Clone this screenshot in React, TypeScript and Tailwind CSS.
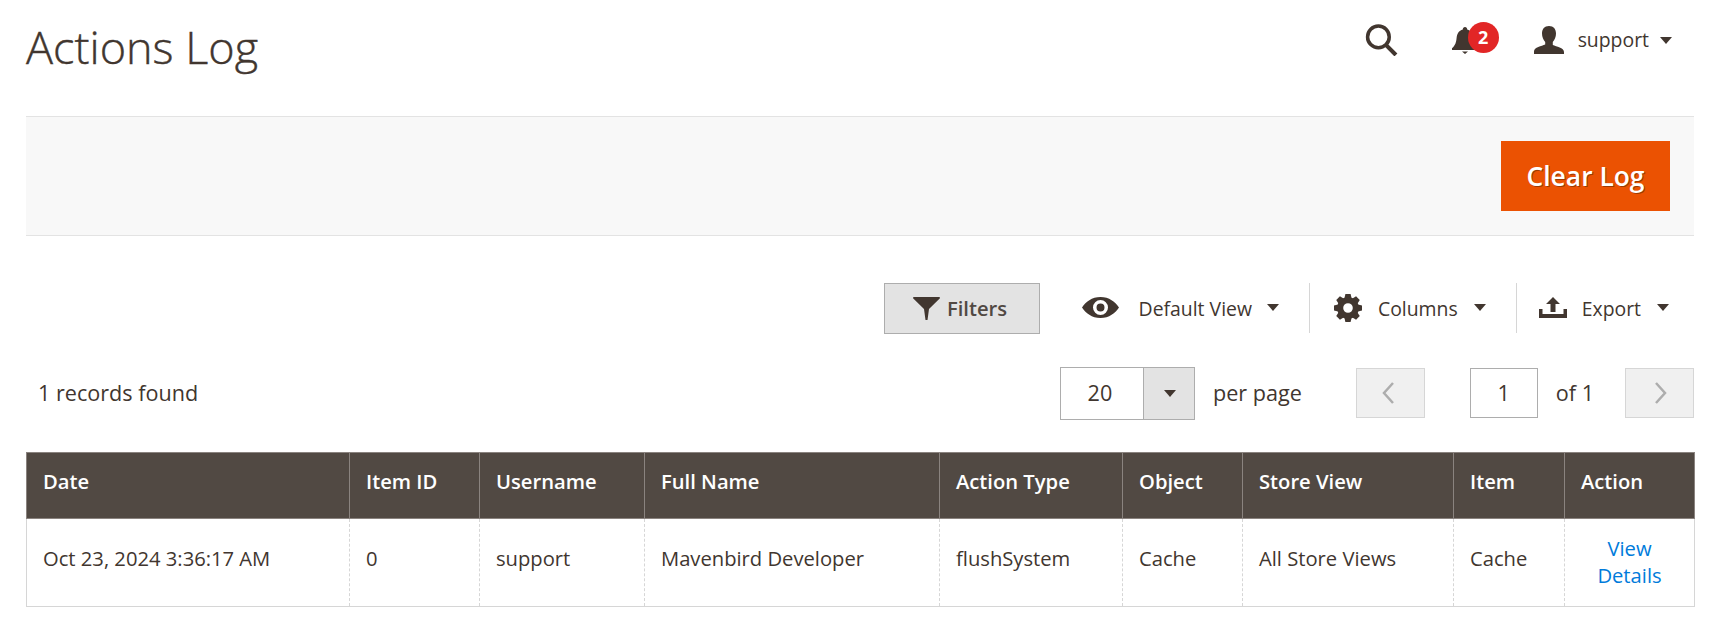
import React from "react";

const Caret = ({ className = "" }: { className?: string }) => (
  <svg className={className} width="12" height="7" viewBox="0 0 12 7">
    <path d="M0 0h12L6 7z" fill="#41362f" />
  </svg>
);

const columns = [
  { label: "Date", width: "w-[323px]" },
  { label: "Item ID", width: "w-[130px]" },
  { label: "Username", width: "w-[165px]" },
  { label: "Full Name", width: "w-[295px]" },
  { label: "Action Type", width: "w-[183px]" },
  { label: "Object", width: "w-[120px]" },
  { label: "Store View", width: "w-[211px]" },
  { label: "Item", width: "w-[111px]" },
  { label: "Action", width: "w-[130px]" },
];

const row = [
  "Oct 23, 2024 3:36:17 AM",
  "0",
  "support",
  "Mavenbird Developer",
  "flushSystem",
  "Cache",
  "All Store Views",
  "Cache",
];

const teeth = [0, 45, 90, 135, 180, 225, 270, 315];

export default function App() {
  return (
    <div className="min-h-[629px] bg-white pl-[26px] pr-[25px] text-[#41362f] font-['Open_Sans',sans-serif] text-[20.2px]">
      {/* Page header */}
      <header className="h-[116px] flex items-start justify-between">
        <h1 className="mt-[18px] text-[45px] leading-[58px] font-light [-webkit-text-stroke:0.4px_#41362f]">Actions Log</h1>
        <div className="flex items-center mt-[25px] mr-[22px] h-[30px]">
          <svg width="33" height="32" viewBox="0 0 32 31" fill="none">
            <circle cx="13" cy="12.5" r="10.5" stroke="#41362f" strokeWidth="3.4" />
            <path d="M20.5 20.5L30 30" stroke="#41362f" strokeWidth="4" />
          </svg>
          <div className="relative ml-[54px] w-[48px] h-[30px]">
            <svg className="absolute left-0 top-[2px]" width="26" height="27" viewBox="0 0 26 27">
              <path d="M13 0c1.400 0 2.200 1 2.200 2.400 4 1 5.800 4.200 6.200 8.600.4 4.400 1.300 7.200 4.600 10.300V23H0v-1.700c3.300-3.100 4.200-5.900 4.600-10.300C5 6.600 6.800 3.400 10.800 2.400 10.800 1 11.600 0 13 0zM10 24.500h6L13 27z" fill="#41362f" />
            </svg>
            <span className="absolute left-[16px] top-[-3px] w-[31px] h-[31px] rounded-full bg-[#e22626] text-white text-[18px] font-bold flex items-center justify-center">
              2
            </span>
          </div>
          <svg className="ml-[34px]" width="30" height="28" viewBox="0 0 30 28">
            <path d="M15 0c4.600 0 7 3 7 7.500 0 3.500-1.400 6.500-3.200 8.500v3c3.500 1.600 11.200 2.500 11.200 7V28H0v-2.500c0-4.500 7.700-5.400 11.200-7V16C9.400 14 8 11 8 7.500 8 3 10.400 0 15 0z" fill="#41362f" />
          </svg>
          <span className="ml-[14px] text-[19.4px] leading-[30px]">support</span>
          <Caret className="ml-[11px]" />
        </div>
      </header>

      {/* Page actions */}
      <div className="h-[120px] bg-[#f8f8f8] border-y border-[#e3e3e3] flex items-center justify-end pr-[24px]">
        <button className="w-[169px] h-[70px] pt-[2px] bg-[#eb5202] text-white text-[26.4px] font-semibold [text-shadow:1px_1px_0_#9c3a03]">
          Clear Log
        </button>
      </div>

      {/* Grid actions */}
      <div className="mt-[46px] h-[52px] flex items-center justify-end pr-[25px] text-[19.4px]">
        <button className="w-[156px] h-[51px] pr-[3px] bg-[#e3e3e3] border border-[#adadad] flex items-center justify-center font-semibold text-[20.2px] text-[#514943]">
          <svg width="27" height="23" viewBox="0 0 27 23" className="mr-[7px]">
            <path d="M1 0h25c1 0 1.300.8.700 1.500L16 12l-1.500 11h-2L11 12 .3 1.500C-.3.800 0 0 1 0z" fill="#41362f" />
          </svg>
          Filters
        </button>
        <div className="ml-[42px] flex items-center">
          <svg width="37" height="21" viewBox="0 0 37 21">
            <path fillRule="evenodd" d="M18.500 0C27 0 33.500 5 37 10.500 33.500 16 27 21 18.500 21S3.500 16 0 10.500C3.500 5 10 0 18.500 0zm0 3a7.500 7.500 0 100 15 7.500 7.500 0 000-15zm0 3.500a4 4 0 110 8 4 4 0 010-8z" fill="#41362f" />
          </svg>
          <span className="ml-[20px] mt-[2px]">Default View</span>
          <Caret className="ml-[15px]" />
        </div>
        <div className="ml-[30px] h-[50px] border-l border-[#d6d6d6]" />
        <div className="ml-[24px] flex items-center">
          <svg width="28" height="28" viewBox="-14 -14 28 28">
            <circle r="7.800" fill="none" stroke="#41362f" strokeWidth="6" />
            {teeth.map((deg) => (
              <path key={deg} d="M-3.800-9L-2.600-14H2.600L3.800-9z" fill="#41362f" transform={`rotate(${deg})`} />
            ))}
          </svg>
          <span className="ml-[16px] mt-[2px]">Columns</span>
          <Caret className="ml-[16px]" />
        </div>
        <div className="ml-[30px] h-[50px] border-l border-[#d6d6d6]" />
        <div className="ml-[22px] flex items-center">
          <svg width="28" height="21" viewBox="0 0 28 21">
            <path d="M14 0l7 7h-4.500v8h-5V7H7zM0 12h3.500v5h21v-5H28v9H0z" fill="#41362f" />
          </svg>
          <span className="ml-[15px] mt-[2px]">Export</span>
          <Caret className="ml-[16px]" />
        </div>
      </div>

      {/* Pagination */}
      <div className="mt-[33px] h-[52px] flex items-center text-[21.6px]">
        <span className="ml-[12px]">1 records found</span>
        <div className="ml-auto flex items-center">
          <div className="w-[135px] h-[53px] flex border border-[#adadad] bg-white">
            <span className="flex-1 flex items-center justify-center pr-[4px]">20</span>
            <span className="w-[51px] pl-[2px] bg-[#e3e3e3] border-l border-[#adadad] flex items-center justify-center">
              <Caret />
            </span>
          </div>
          <span className="ml-[18px]">per page</span>
          <span className="ml-[54px] w-[69px] h-[50px] pr-[4px] bg-[#f0f0f0] border border-[#d6d6d6] flex items-center justify-center">
            <svg width="14" height="22" viewBox="0 0 14 22" fill="none">
              <path d="M12 1L3 11l9 10" stroke="#adadad" strokeWidth="2.500" />
            </svg>
          </span>
          <span className="ml-[45px] w-[68px] h-[50px] border border-[#adadad] flex items-center justify-center">1</span>
          <span className="ml-[18px]">of 1</span>
          <span className="ml-[31px] w-[69px] h-[50px] pl-[2px] bg-[#f0f0f0] border border-[#d6d6d6] flex items-center justify-center">
            <svg width="14" height="22" viewBox="0 0 14 22" fill="none">
              <path d="M2 1l9 10-9 10" stroke="#adadad" strokeWidth="2.500" />
            </svg>
          </span>
        </div>
      </div>

      {/* Log table */}
      <table className="mt-[33px] w-[1668px] table-fixed border-collapse">
        <thead>
          <tr>
            {columns.map((col) => (
              <th
                key={col.label}
                className={`${col.width} h-[66px] bg-[#514943] border border-[#8a837f] px-[16px] pb-[8px] text-left font-semibold text-white`}
              >
                {col.label}
              </th>
            ))}
          </tr>
        </thead>
        <tbody>
          <tr>
            {row.map((cell, i) => (
              <td
                key={i}
                className="h-[88px] border border-[#d6d6d6] px-[16px] pb-[8px] text-left [border-left-style:dashed] [border-right-style:dashed] first:[border-left-style:solid]"
              >
                {cell}
              </td>
            ))}
            <td className="border border-[#d6d6d6] [border-left-style:dashed] px-[16px] pb-[2px] text-center leading-[27px] text-[#007bdb]">
              View Details
            </td>
          </tr>
        </tbody>
      </table>
    </div>
  );
}
